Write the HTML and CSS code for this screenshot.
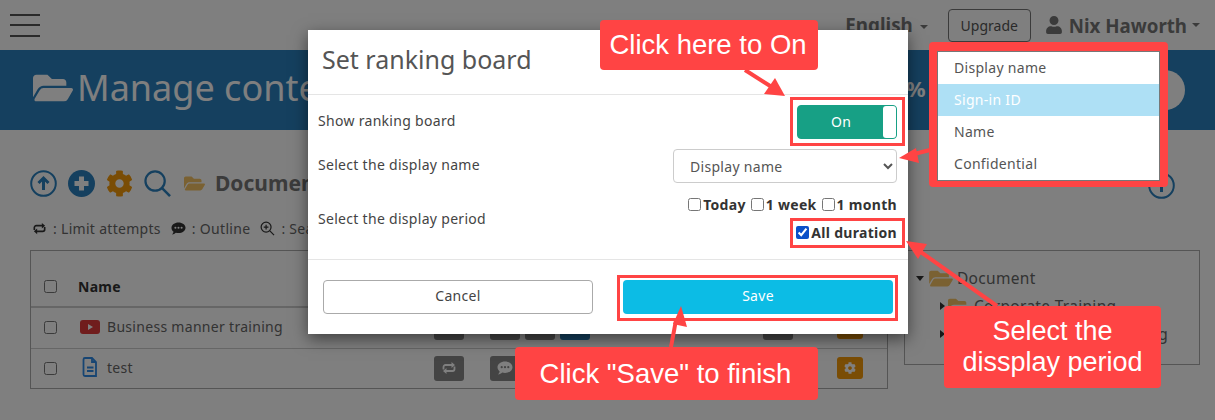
FILE: index.html
```html
<!DOCTYPE html>
<html lang="en">
<head>
  <meta charset="UTF-8" />
  <title>Set ranking board</title>
  <link rel="stylesheet" href="styles.css">
</head>
<body>
  <svg class="defs" width="0" height="0">
    <symbol id="i-folder" viewBox="0 0 576 512"><path d="M572.694 292.093L500.27 416.248A63.997 63.997 0 0 1 444.989 448H45.025c-18.523 0-30.064-20.093-20.731-36.093l72.424-124.155A64 64 0 0 1 152 256h399.964c18.523 0 30.064 20.093 20.73 36.093zM152 224h328v-48c0-26.51-21.49-48-48-48H272l-64-64H48C21.49 64 0 85.49 0 112v278.046l69.077-118.418C86.214 242.25 117.989 224 152 224z"/></symbol>
    <symbol id="i-cog" viewBox="0 0 512 512"><path d="M487.4 315.7l-42.6-24.6c4.3-23.2 4.3-47 0-70.2l42.6-24.6c4.9-2.8 7.1-8.6 5.5-14-11.1-35.6-30-67.8-54.7-94.6-3.8-4.1-10-5.1-14.8-2.3L380.8 110c-17.9-15.4-38.5-27.3-60.8-35.1V25.8c0-5.6-3.9-10.5-9.4-11.7-36.7-8.2-74.3-7.8-109.2 0-5.5 1.2-9.4 6.1-9.4 11.7V75c-22.2 7.9-42.8 19.8-60.8 35.1L88.7 85.5c-4.9-2.8-11-1.9-14.8 2.3-24.7 26.7-43.6 58.9-54.7 94.6-1.7 5.4.6 11.2 5.5 14L67.3 221c-4.3 23.2-4.3 47 0 70.2l-42.6 24.6c-4.9 2.8-7.1 8.6-5.5 14 11.1 35.6 30 67.8 54.7 94.6 3.8 4.1 10 5.1 14.8 2.3l42.6-24.6c17.9 15.4 38.5 27.3 60.8 35.1v49.2c0 5.6 3.9 10.5 9.4 11.7 36.7 8.2 74.3 7.8 109.2 0 5.5-1.2 9.4-6.1 9.4-11.7v-49.2c22.2-7.9 42.8-19.8 60.8-35.1l42.6 24.6c4.9 2.8 11 1.9 14.8-2.3 24.7-26.7 43.6-58.9 54.7-94.6 1.5-5.5-.7-11.3-5.6-14.1zM256 336c-44.1 0-80-35.9-80-80s35.9-80 80-80 80 35.9 80 80-35.9 80-80 80z"/></symbol>
    <symbol id="i-user" viewBox="0 0 448 512"><path d="M224 256c70.7 0 128-57.3 128-128S294.7 0 224 0 96 57.3 96 128s57.3 128 128 128zm89.6 32h-16.7c-22.2 10.2-46.9 16-72.9 16s-50.6-5.8-72.9-16h-16.7C60.2 288 0 348.2 0 422.4V464c0 26.5 21.5 48 48 48h352c26.5 0 48-21.5 48-48v-41.6c0-74.2-60.2-134.4-134.4-134.4z"/></symbol>
    <symbol id="i-repeat" viewBox="0 0 16 16"><path d="M2.500 9.500V7A2 2 0 0 1 4.500 5H11M13.500 6.500V9a2 2 0 0 1-2 2H5" fill="none" stroke="currentColor" stroke-width="1.800"/><path d="M10.500 2l3.500 3-3.500 3zM5.500 8L2 11l3.500 3z" fill="currentColor"/></symbol>
    <symbol id="i-comment" viewBox="0 0 16 16"><path fill-rule="evenodd" d="M8 1.500c4.200 0 7.500 2.500 7.500 5.700s-3.300 5.700-7.500 5.700c-1 0-1.900-.1-2.800-.4C4.200 13.400 2.700 14.300 1 14.400c1-1 1.500-2 1.700-3C1.300 10.400.5 8.900.5 7.200.5 4 3.800 1.500 8 1.500zM4.700 6.100a1.100 1.100 0 1 0 0 2.200 1.100 1.100 0 0 0 0-2.200zm3.300 0a1.100 1.100 0 1 0 0 2.200 1.100 1.100 0 0 0 0-2.200zm3.300 0a1.100 1.100 0 1 0 0 2.200 1.100 1.100 0 0 0 0-2.200z"/></symbol>
  </svg>

  <div class="page">
    <header class="topbar">
      <div class="burger"><span></span><span></span><span></span></div>
      <div class="topbar-right">
        <span class="lang">English<i class="caret"></i></span>
        <button class="upgrade">Upgrade</button>
        <span class="user">
          <svg class="user-icon"><use href="#i-user"/></svg>
          Nix Haworth<i class="caret"></i>
        </span>
      </div>
    </header>

    <div class="band">
      <h1 class="band-title"><svg class="band-folder"><use href="#i-folder"/></svg>Manage contents</h1>
      <div class="band-right">
        <span class="percent">%</span>
        <span class="band-circle"></span>
      </div>
    </div>

    <div class="content">
      <div class="main-col">
        <div class="toolbar">
          <svg class="tool" viewBox="0 0 27 27"><circle cx="13.500" cy="13.500" r="12.300" fill="none" stroke="#2a80be" stroke-width="2"/><path d="M13.500 20v-10M8.500 13l5-5 5 5" fill="none" stroke="#2a80be" stroke-width="3"/></svg>
          <svg class="tool" viewBox="0 0 27 27"><circle cx="13.500" cy="13.500" r="13.500" fill="#2a80be"/><path d="M13.500 6.500v14M6.500 13.500h14" stroke="#fff" stroke-width="5"/></svg>
          <svg class="tool tool-gear"><use href="#i-cog"/></svg>
          <svg class="tool" viewBox="0 0 28 28"><circle cx="11.500" cy="11.500" r="10" fill="none" stroke="#2a80be" stroke-width="2.300"/><path d="M18.500 18.500l8.500 8.500" stroke="#2a80be" stroke-width="2.600"/></svg>
          <svg class="tool-folder"><use href="#i-folder"/></svg>
          <b class="crumb">Document</b>
        </div>

        <div class="legend">
          <svg class="legend-icon"><use href="#i-repeat"/></svg><span>: Limit attempts</span>
          <svg class="legend-icon"><use href="#i-comment"/></svg><span>: Outline</span>
          <svg class="legend-icon" viewBox="0 0 16 16"><circle cx="6.500" cy="6.500" r="5.300" fill="none" stroke="currentColor" stroke-width="1.300"/><path d="M10.500 10.500l4.500 4.500M6.500 4v5M4 6.500h5" stroke="currentColor" stroke-width="1.300"/></svg><span>: Search</span>
        </div>

        <div class="table">
          <div class="row row-head">
            <input type="checkbox" class="row-check">
            <b class="col-name">Name</b>
          </div>
          <div class="row row-first">
            <input type="checkbox" class="row-check">
            <span class="col-name">
              <svg class="file-icon" viewBox="0 0 20 16"><rect width="20" height="14" y="1" rx="3" fill="#e03a3a"/><path d="M8 5l5 3-5 3z" fill="#fff"/></svg>
              Business manner training
            </span>
            <div class="tags">
              <span class="tag"></span>
              <span class="tag tag-second"></span>
              <span class="tag"></span>
              <span class="tag tag-blue"></span>
              <span class="tag tag-late"></span>
              <span class="tag-gear"><svg><use href="#i-cog"/></svg></span>
            </div>
          </div>
          <div class="row">
            <input type="checkbox" class="row-check">
            <span class="col-name">
              <svg class="file-icon" viewBox="0 0 20 20"><path d="M5 1h7l4 4v14H5a1.500 1.500 0 0 1-1.500-1.500v-15A1.500 1.500 0 0 1 5 1z" fill="none" stroke="#2e8ae6" stroke-width="1.800"/><path d="M12 1v4h4M7 10.500h6.500M7 14h6.500" fill="none" stroke="#2e8ae6" stroke-width="1.800"/></svg>
              test
            </span>
            <div class="tags">
              <span class="tag"><svg><use href="#i-repeat"/></svg></span>
              <span class="tag tag-second"><svg><use href="#i-comment"/></svg></span>
              <span class="tag"></span>
              <span class="tag tag-blue"></span>
              <span class="tag tag-late"></span>
              <span class="tag-gear"><svg><use href="#i-cog"/></svg></span>
            </div>
          </div>
        </div>
      </div>

      <div class="side-col">
        <svg class="help-circle" viewBox="0 0 27 27"><circle cx="13.500" cy="13.500" r="12.300" fill="none" stroke="#2a80be" stroke-width="2"/><path d="M13.500 12v8" stroke="#2a80be" stroke-width="3"/></svg>
        <div class="tree">
          <div class="tree-item"><i class="tri-down"></i><svg class="tree-folder"><use href="#i-folder"/></svg>Document</div>
          <div class="tree-item tree-sub"><i class="tri-right"></i><svg class="tree-folder"><use href="#i-folder"/></svg>Corporate Training</div>
          <div class="tree-item tree-sub"><i class="tri-right"></i><svg class="tree-folder"><use href="#i-folder"/></svg>Business manner training</div>
        </div>
      </div>
    </div>
  </div>

  <div class="backdrop"></div>

  <div class="modal">
    <div class="modal-head">Set ranking board</div>
    <div class="modal-body">
      <div class="field field-toggle">
        <label class="field-label">Show ranking board</label>
        <div class="toggle"><span>On</span><i class="knob"></i></div>
      </div>
      <div class="field field-select">
        <label class="field-label">Select the display name</label>
        <select class="name-select"><option>Display name</option></select>
      </div>
      <div class="field field-period">
        <label class="field-label">Select the display period</label>
        <div class="periods">
          <div class="period-row">
            <label class="check"><input type="checkbox">Today</label>
            <label class="check"><input type="checkbox">1 week</label>
            <label class="check"><input type="checkbox">1 month</label>
          </div>
          <div class="period-row">
            <label class="check"><input type="checkbox" checked>All duration</label>
          </div>
        </div>
      </div>
    </div>
    <div class="modal-foot">
      <button class="btn btn-cancel">Cancel</button>
      <button class="btn btn-save">Save</button>
    </div>
  </div>

  <!-- tutorial marks on top of the screenshot -->
  <svg class="arrows" viewBox="0 0 1215 420">
    <path d="M745 70l30 19" class="arrow-line"/><path d="M785 96l-21-2 11-16z" class="arrow-head"/>
    <path d="M930 150l-20 5" class="arrow-line"/><path d="M899 158l17-10 3 15z" class="arrow-head"/>
    <path d="M997 306l-79-56" class="arrow-line"/><path d="M906 241l21 3-9 15z" class="arrow-head"/>
    <path d="M671 347l5-27" class="arrow-line"/><path d="M681 306l6 21-14-3z" class="arrow-head"/>
  </svg>
  <div class="mark mark-toggle"></div>
  <div class="mark mark-duration"></div>
  <div class="mark mark-save"></div>
  <div class="callout callout-on">Click here to On</div>
  <div class="callout callout-period">Select the dissplay period</div>
  <div class="callout callout-save">Click "Save" to finish</div>
  <div class="name-menu">
    <div class="name-list">
      <div class="name-option">Display name</div>
      <div class="name-option name-option-on">Sign-in ID</div>
      <div class="name-option">Name</div>
      <div class="name-option">Confidential</div>
    </div>
  </div>
</body>
</html>
```

FILE: styles.css
```css
html, body {
  margin: 0;
  padding: 0;
  height: 100%;
  overflow: hidden;
  background: #fff;
  font-family: "Noto Sans", sans-serif;
  font-size: 14px;
  letter-spacing: .3px;
  color: #444;
}

.defs {
  position: absolute;
}

.page {
  height: 100%;
}

/* top bar */
.topbar {
  height: 50px;
  background: #fff;
  display: flex;
  justify-content: space-between;
  align-items: center;
  padding: 0 15px 0 10px;
  box-sizing: border-box;
}

.burger {
  width: 30px;
  display: flex;
  flex-direction: column;
  gap: 8.500px;
}

.burger span {
  height: 2px;
  background: #555;
}

.topbar-right {
  display: flex;
  align-items: center;
}

.caret {
  display: inline-block;
  width: 0;
  height: 0;
  border-left: 4px solid transparent;
  border-right: 4px solid transparent;
  border-top: 4px solid #777;
  vertical-align: middle;
}

.lang {
  font-size: 18.800px;
  font-weight: 700;
  letter-spacing: 0;
  color: #777;
}

.lang .caret {
  margin-left: 7px;
}

.upgrade {
  margin-left: 20px;
  width: 83px;
  height: 33px;
  background: transparent;
  border: 1px solid #777;
  border-radius: 4px;
  font: 14px "Noto Sans", sans-serif;
  color: #555;
}

.user {
  margin-left: 15px;
  display: flex;
  align-items: center;
  font-size: 18.700px;
  font-weight: 700;
  letter-spacing: 0;
  color: #777;
}

.user-icon {
  width: 16px;
  height: 18px;
  margin-right: 7px;
  fill: #777;
}

.user .caret {
  margin-left: 5px;
}

/* blue band */
.band {
  height: 80px;
  background: #2a80be;
  display: flex;
  justify-content: space-between;
  align-items: center;
  padding: 0 30px 0 33px;
}

.band-title {
  margin: -5px 0 0;
  display: flex;
  align-items: center;
  font-size: 36px;
  font-weight: 400;
  letter-spacing: 0;
  color: #fff;
}

.band-folder {
  width: 40px;
  height: 36px;
  margin-right: 4px;
  fill: #fff;
}

.band-right {
  display: flex;
  align-items: center;
  gap: 219px;
}

.percent {
  margin-bottom: 4px;
  font-size: 22px;
  font-weight: 700;
  color: #fff;
}

.band-circle {
  width: 40px;
  height: 40px;
  border-radius: 50%;
  background: #fff;
}

/* content */
.content {
  display: flex;
  gap: 16px;
  padding: 0 15px 0 30px;
}

.main-col {
  width: 858px;
}

.toolbar {
  height: 54px;
  margin-top: 26px;
  display: flex;
  align-items: center;
}

.tool {
  width: 27px;
  height: 27px;
  margin-right: 11px;
}

.tool-gear {
  fill: #f59a0a;
}

.tool-folder {
  width: 21px;
  height: 19px;
  margin: 0 10px 0 2px;
  fill: #f5c265;
}

.crumb {
  font-size: 21px;
  letter-spacing: 0;
  color: #777;
}

.legend {
  height: 30px;
  margin-top: 3px;
  padding-left: 2px;
  display: flex;
  align-items: center;
  color: #666;
}

.legend-icon {
  width: 15px;
  height: 15px;
  margin-right: 6px;
  fill: #333;
  color: #333;
}

.legend span {
  margin-right: 10px;
}

.table {
  margin-top: 7px;
  border: 1px solid #aaa;
}

.row {
  height: 40px;
  padding-bottom: 1px;
  display: flex;
  align-items: center;
  position: relative;
  border-top: 1px solid #ccc;
  box-sizing: border-box;
}

.row-head {
  height: 57px;
  padding: 16px 0 0;
  border-top: 0;
  border-bottom: 2px solid #ccc;
}

.row-first {
  border-top: 0;
}

.row-check {
  width: 13px;
  height: 13px;
  margin: 0 0 0 13px;
}

.col-name {
  margin-left: 23px;
  padding-bottom: 2px;
  width: 354px;
  flex: none;
  display: flex;
  align-items: center;
  color: #666;
}

.row-head .col-name {
  margin-left: 21px;
  padding-bottom: 0;
  color: #333;
}

.file-icon {
  width: 20px;
  height: 20px;
  margin-right: 7px;
}

.tags {
  display: flex;
  align-items: center;
}

.tag {
  width: 30px;
  height: 25px;
  margin-right: 5px;
  border-radius: 3px;
  background: #888;
  display: flex;
  align-items: center;
  justify-content: center;
  fill: #fff;
  color: #fff;
  flex: none;
}

.tag svg {
  width: 16px;
  height: 16px;
}

.tag-second {
  margin-left: 21px;
}

.tag-blue {
  background: #2a80be;
}

.tag-late {
  margin-left: 168px;
  margin-right: 44px;
}

.tag-gear {
  width: 26px;
  height: 22px;
  border-radius: 3px;
  background: #f59a0a;
  display: flex;
  align-items: center;
  justify-content: center;
  fill: #fff;
}

.tag-gear svg {
  width: 12px;
  height: 12px;
}

.side-col {
  width: 296px;
  display: flex;
  flex-direction: column;
  align-items: flex-end;
}

.help-circle {
  width: 27px;
  height: 27px;
  margin: 42px 25px 0 0;
}

.tree {
  width: 100%;
  box-sizing: border-box;
  height: 115px;
  margin-top: 51px;
  padding: 13px 0 0 11px;
  border: 1px solid #aaa;
  font-size: 15.500px;
  color: #666;
}

.tree-item {
  height: 28px;
  display: flex;
  align-items: center;
}

.tree-sub {
  padding-left: 24px;
}

.tree-folder {
  width: 24px;
  height: 21px;
  margin: 0 4px 0 3px;
  fill: #f5c265;
}

.tree-sub .tree-folder {
  width: 22px;
  height: 20px;
  margin-left: 1px;
}

.tri-down {
  width: 0;
  height: 0;
  border-left: 4px solid transparent;
  border-right: 4px solid transparent;
  border-top: 5px solid #333;
  margin-right: 2px;
}

.tri-right {
  width: 0;
  height: 0;
  border-top: 4px solid transparent;
  border-bottom: 4px solid transparent;
  border-left: 5px solid #333;
  margin-right: 2px;
}

/* modal */
.backdrop {
  position: absolute;
  left: 0;
  top: 0;
  width: 100%;
  height: 100%;
  background: rgba(0, 0, 0, .5);
}

.modal {
  position: absolute;
  left: 308px;
  top: 30px;
  width: 600px;
  height: 304px;
  background: #fff;
  box-shadow: 0 5px 15px rgba(0, 0, 0, .5);
  display: flex;
  flex-direction: column;
}

.modal-head {
  height: 65px;
  padding: 0 0 6px 14px;
  box-sizing: border-box;
  border-bottom: 1px solid #e5e5e5;
  display: flex;
  align-items: center;
  font-size: 25px;
  letter-spacing: 0;
  color: #555;
}

.modal-body {
  flex: 1;
  padding: 10px 11px 0 10px;
}

.field {
  display: flex;
  justify-content: space-between;
  align-items: center;
}

.field-label {
  padding-bottom: 3px;
}

.field-period .field-label {
  padding: 1px 0 0;
}

.field-toggle {
  height: 34px;
}

.field-select {
  height: 34px;
  margin-top: 10px;
}

.field-period {
  margin-top: 7px;
}

.toggle {
  width: 100px;
  height: 34px;
  box-sizing: border-box;
  border: 1px solid #17a085;
  border-radius: 4px;
  background: #17a085;
  color: #fff;
  display: flex;
  align-items: center;
  justify-content: flex-end;
}

.toggle span {
  flex: 1;
  padding: 0 0 2px 1px;
  text-align: center;
}

.knob {
  width: 13px;
  height: 32px;
  background: #fff;
  border-radius: 3px;
}

.name-select {
  width: 224px;
  height: 34px;
  padding: 0 12px;
  border: 1px solid #ccc;
  border-radius: 4px;
  background: #fff;
  font: 14px "Noto Sans", sans-serif;
  letter-spacing: .3px;
  color: #555;
}

.periods {
  text-align: right;
  color: #333;
}

.period-row {
  height: 28px;
  display: flex;
  justify-content: flex-end;
  align-items: center;
  gap: 5px;
}

.check {
  display: flex;
  align-items: center;
  font-weight: 700;
}

.check input {
  width: 13px;
  height: 13px;
  margin: 0 2px 0 0;
  accent-color: #0b50c8;
}

.modal-foot {
  height: 75px;
  box-sizing: border-box;
  border-top: 1px solid #e5e5e5;
  padding: 20px 15px;
  display: flex;
  gap: 30px;
}

.btn {
  width: 270px;
  height: 34px;
  padding: 0 0 3px;
  border-radius: 4px;
  font: 14px "Noto Sans", sans-serif;
  letter-spacing: .3px;
}

.btn-cancel {
  background: #fff;
  border: 1px solid #aaa;
  color: #444;
}

.btn-save {
  background: #0cbce5;
  border: 0;
  color: #fff;
}

/* annotations */
.arrows {
  position: absolute;
  left: 0;
  top: 0;
  width: 1215px;
  height: 420px;
}

.arrow-line {
  fill: none;
  stroke: #ff4444;
  stroke-width: 4;
}

.arrow-head {
  fill: #ff4444;
}

.mark {
  position: absolute;
  box-sizing: border-box;
  border: 3px solid #ff4444;
}

.mark-toggle {
  left: 790px;
  top: 97px;
  width: 115px;
  height: 49px;
}

.mark-duration {
  left: 790px;
  top: 218px;
  width: 115px;
  height: 30px;
}

.mark-save {
  left: 617px;
  top: 275px;
  width: 281px;
  height: 46px;
}

.callout {
  position: absolute;
  box-sizing: border-box;
  background: #ff4444;
  border-radius: 4px;
  color: #fff;
  font: 27.500px/1.150 "Liberation Sans", sans-serif;
  letter-spacing: 0;
  display: flex;
  align-items: center;
  justify-content: center;
  text-align: center;
}

.callout-on {
  left: 600px;
  top: 20px;
  width: 218px;
  height: 50px;
  padding-right: 2px;
}

.callout-period {
  left: 944px;
  top: 306px;
  width: 217px;
  height: 82px;
  font-size: 27px;
}

.callout-save {
  left: 515px;
  top: 347px;
  width: 303px;
  height: 53px;
  padding-right: 2px;
}

.name-menu {
  position: absolute;
  left: 929px;
  top: 42px;
  width: 239px;
  box-sizing: border-box;
  border-style: solid;
  border-color: #ff4444;
  border-width: 9px 8px 6px 8px;
  border-radius: 4px;
  background: #fff;
}

.name-list {
  border: 1px solid #777;
}

.name-option {
  height: 32px;
  padding: 0 0 2px 16px;
  box-sizing: border-box;
  display: flex;
  align-items: center;
  color: #555;
}

.name-option-on {
  background: #aee0f5;
  color: #fff;
}
```
